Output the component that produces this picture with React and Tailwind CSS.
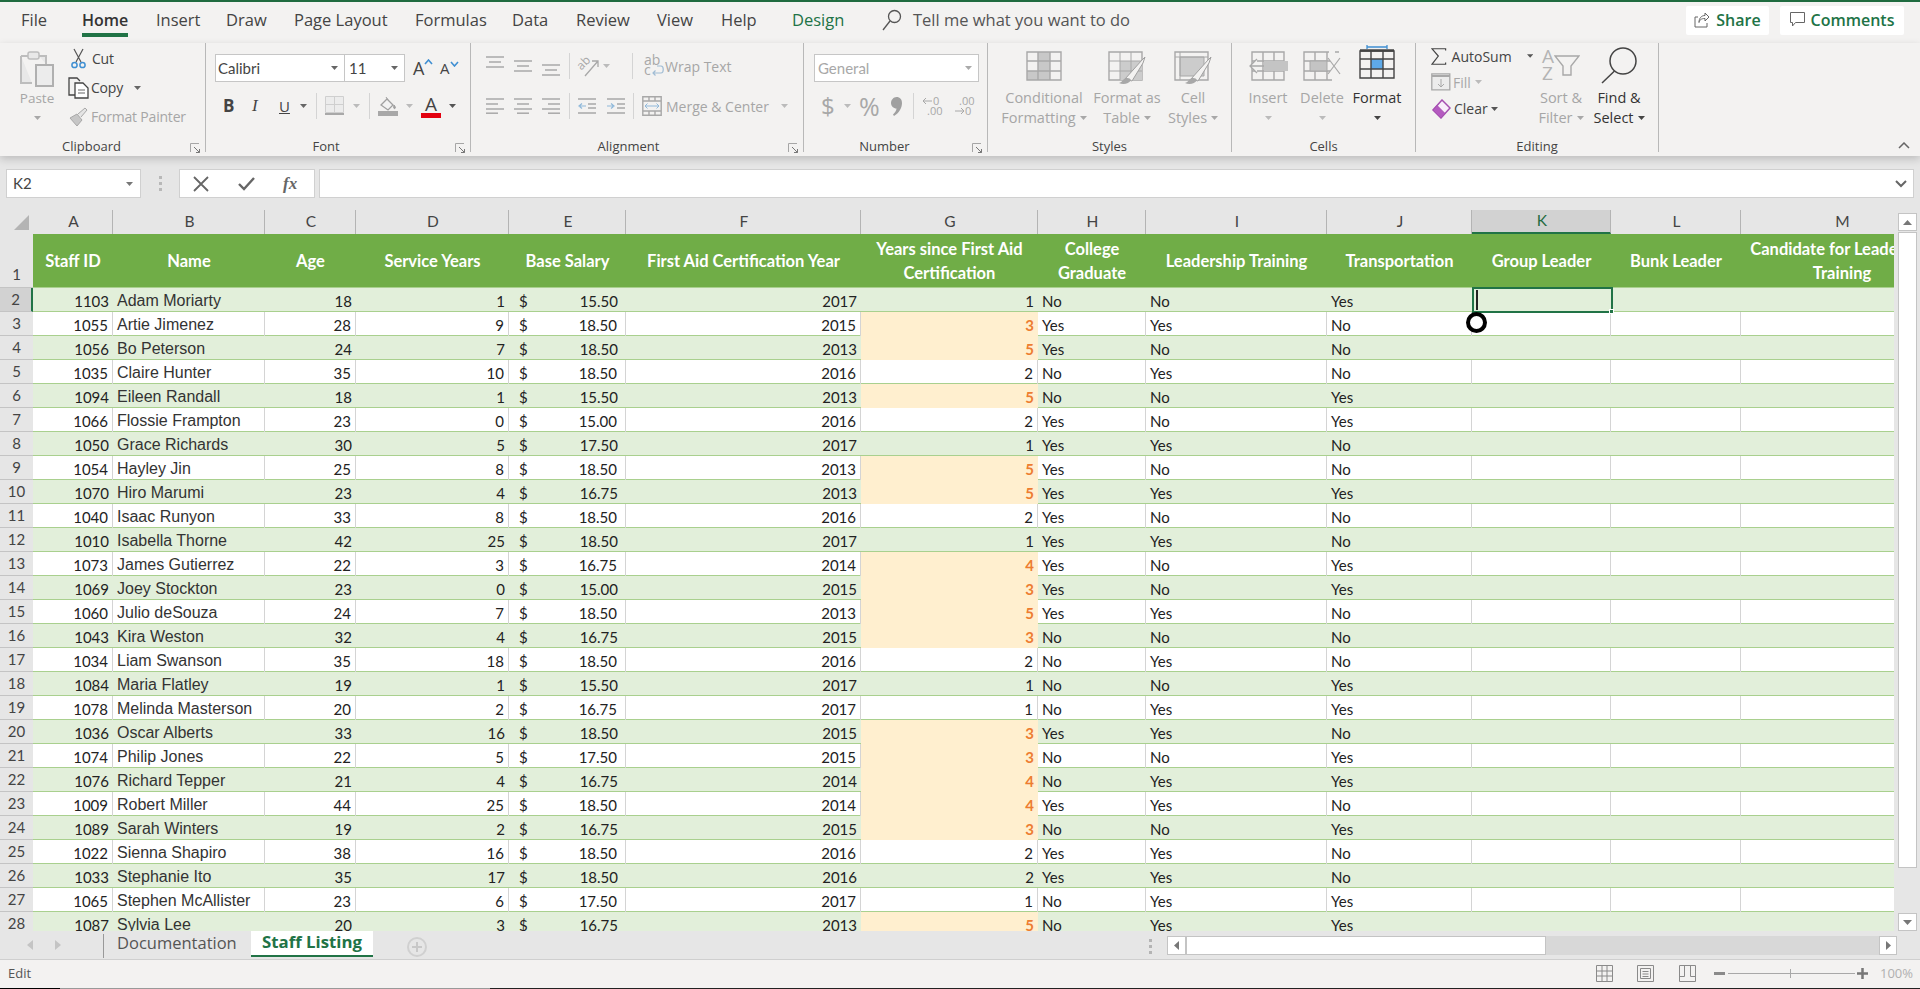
import React from 'react';

const UI = { fontFamily: '"Open Sans", "Noto Sans", sans-serif' };
const CAL = { fontFamily: 'Lato, "Open Sans", sans-serif' };
const ARIAL = { fontFamily: '"Liberation Sans", Arial, sans-serif' };

const GRID = 'grid grid-cols-[80px_152px_91px_153px_117px_235px_177px_108px_181px_145px_139px_130px_202px]';

const STAFF = [
  [1103, 'Adam Moriarty', 18, 1, '15.50', 2017, 1, 'No', 'No', 'Yes'],
  [1055, 'Artie Jimenez', 28, 9, '18.50', 2015, 3, 'Yes', 'Yes', 'No'],
  [1056, 'Bo Peterson', 24, 7, '18.50', 2013, 5, 'Yes', 'No', 'No'],
  [1035, 'Claire Hunter', 35, 10, '18.50', 2016, 2, 'No', 'Yes', 'No'],
  [1094, 'Eileen Randall', 18, 1, '15.50', 2013, 5, 'No', 'No', 'Yes'],
  [1066, 'Flossie Frampton', 23, 0, '15.00', 2016, 2, 'Yes', 'No', 'Yes'],
  [1050, 'Grace Richards', 30, 5, '17.50', 2017, 1, 'Yes', 'Yes', 'No'],
  [1054, 'Hayley Jin', 25, 8, '18.50', 2013, 5, 'Yes', 'No', 'No'],
  [1070, 'Hiro Marumi', 23, 4, '16.75', 2013, 5, 'Yes', 'Yes', 'Yes'],
  [1040, 'Isaac Runyon', 33, 8, '18.50', 2016, 2, 'Yes', 'No', 'No'],
  [1010, 'Isabella Thorne', 42, 25, '18.50', 2017, 1, 'Yes', 'Yes', 'No'],
  [1073, 'James Gutierrez', 22, 3, '16.75', 2014, 4, 'Yes', 'No', 'Yes'],
  [1069, 'Joey Stockton', 23, 0, '15.00', 2015, 3, 'Yes', 'No', 'Yes'],
  [1060, 'Julio deSouza', 24, 7, '18.50', 2013, 5, 'Yes', 'Yes', 'No'],
  [1043, 'Kira Weston', 32, 4, '16.75', 2015, 3, 'No', 'No', 'No'],
  [1034, 'Liam Swanson', 35, 18, '18.50', 2016, 2, 'No', 'Yes', 'No'],
  [1084, 'Maria Flatley', 19, 1, '15.50', 2017, 1, 'No', 'No', 'Yes'],
  [1078, 'Melinda Masterson', 20, 2, '16.75', 2017, 1, 'No', 'Yes', 'Yes'],
  [1036, 'Oscar Alberts', 33, 16, '18.50', 2015, 3, 'Yes', 'Yes', 'No'],
  [1074, 'Philip Jones', 22, 5, '17.50', 2015, 3, 'No', 'No', 'Yes'],
  [1076, 'Richard Tepper', 21, 4, '16.75', 2014, 4, 'No', 'Yes', 'Yes'],
  [1009, 'Robert Miller', 44, 25, '18.50', 2014, 4, 'Yes', 'Yes', 'No'],
  [1089, 'Sarah Winters', 19, 2, '16.75', 2015, 3, 'No', 'No', 'Yes'],
  [1022, 'Sienna Shapiro', 38, 16, '18.50', 2016, 2, 'Yes', 'Yes', 'No'],
  [1033, 'Stephanie Ito', 35, 17, '18.50', 2016, 2, 'Yes', 'Yes', 'No'],
  [1065, 'Stephen McAllister', 23, 6, '17.50', 2017, 1, 'No', 'Yes', 'Yes'],
  [1087, 'Sylvia Lee', 20, 3, '16.75', 2013, 5, 'No', 'Yes', 'Yes'],
];

const COL_LABELS = ['A', 'B', 'C', 'D', 'E', 'F', 'G', 'H', 'I', 'J', 'K', 'L', 'M'];

const GREY = '#a8a8a8';

function Caret({ color = '#8a8a8a', className = '' }) {
  return (
    <svg width="7" height="4" viewBox="0 0 7 4" className={className}>
      <path d="M0 0h7L3.5 4z" fill={color} />
    </svg>
  );
}

function Launcher() {
  return (
    <svg width="11" height="11" viewBox="0 0 11 11" className="absolute right-[4px] bottom-[2px]">
      <path d="M.5 9V.5H9" fill="none" stroke="#a6a6a6" />
      <path d="M4 4l5.5 5.5M6 9.5h3.5V6" fill="none" stroke="#777" />
    </svg>
  );
}

function Sep({ className = 'h-[109px] bg-[#b8b8b8]' }) {
  return <div className={`w-px shrink-0 ${className}`} />;
}

function MiniSep() {
  return <div className="w-px h-[26px] bg-[#d4d4d4] shrink-0" />;
}

function Group({ label, launcher, className = '', children }) {
  return (
    <div className={`relative flex flex-col h-full shrink-0 ${className}`}>
      <div className="h-[95px]">{children}</div>
      <div className="h-[18px] pb-[2px] flex items-center justify-center text-[13px] leading-none text-[#444]">{label}</div>
      {launcher && <Launcher />}
    </div>
  );
}

// ribbon big button: icon on top, up to two lines of label
function BigButton({ icon, iconClass = 'pt-[8px]', line1, line2, caret, disabled = true, className = '' }) {
  const color = disabled ? 'text-[#a6a6a6]' : 'text-[#333]';
  return (
    <div className={`flex flex-col items-center shrink-0 ${color} text-[14.5px] leading-[20px] ${className}`}>
      <div className={`h-[45px] flex items-start justify-center ${iconClass}`}>{icon}</div>
      <div className="whitespace-nowrap">{line1}</div>
      <div className="whitespace-nowrap h-[20px] flex items-center gap-[4px]">
        {line2}
        {caret && <Caret color={disabled ? '#a8a8a8' : '#444'} />}
      </div>
    </div>
  );
}

/* ---------- ribbon icons ---------- */

function PasteIcon() {
  return (
    <svg width="36" height="38" viewBox="0 0 36 38">
      <path d="M2 6h7M20 6h7v8M2 6v27h11" fill="#e8e8e8" stroke="#bdbdbd" strokeWidth="2" />
      <rect x="9" y="2" width="11" height="7" rx="2" fill="#e8e8e8" stroke="#bdbdbd" strokeWidth="1.5" />
      <rect x="17" y="15" width="17" height="21" fill="#ececec" stroke="#b0b0b0" strokeWidth="2" />
    </svg>
  );
}

function ScissorsIcon() {
  return (
    <svg width="15" height="21" viewBox="0 0 15 21">
      <path d="M3 1l7 13M12 1L5 14" stroke="#555" strokeWidth="1.2" fill="none" />
      <circle cx="3.5" cy="17" r="2.6" fill="none" stroke="#3f8fd2" strokeWidth="1.5" />
      <circle cx="11.5" cy="17" r="2.6" fill="none" stroke="#3f8fd2" strokeWidth="1.5" />
    </svg>
  );
}

function CopyIcon() {
  return (
    <svg width="21" height="22" viewBox="0 0 21 22">
      <path d="M7 18H1V1h8l3 3" fill="none" stroke="#444" strokeWidth="1.3" />
      <path d="M7 6h8l5 5v10H7z" fill="#fff" stroke="#444" strokeWidth="1.3" />
      <path d="M10 13h7M10 16h7" stroke="#666" />
    </svg>
  );
}

function PainterIcon() {
  return (
    <svg width="20" height="20" viewBox="0 0 20 20">
      <path d="M2 11l7-4 5 6-5 6C7 16 4 14 2 11z" fill="#c6c6c6" stroke="#a8a8a8" />
      <path d="M10 7l7-6 2 2-6 7" fill="#e4e4e4" stroke="#a8a8a8" />
    </svg>
  );
}

function GrowIcon({ up }) {
  return (
    <svg width="9" height="6" viewBox="0 0 9 6">
      <path d={up ? 'M1 5l3.5-4L8 5' : 'M1 1l3.5 4L8 1'} fill="none" stroke="#3f8fd2" strokeWidth="1.6" />
    </svg>
  );
}

function BordersIcon() {
  return (
    <svg width="19" height="20" viewBox="0 0 19 20">
      <path d="M.5.5h18v16H.5zM9.5.5v16M.5 8.5h18" fill="#ececec" stroke="#cfcfcf" />
      <path d="M0 18h19" stroke="#a8a8a8" strokeWidth="2" />
    </svg>
  );
}

function FillIcon() {
  return (
    <svg width="20" height="20" viewBox="0 0 20 20">
      <path d="M3 9l6-6 6 6-5 5z" fill="#f2f2f2" stroke="#a0a0a0" strokeWidth="1.3" />
      <path d="M8 1l2 3M16 9c1 1.500 2 2.500 1 3.500-1 .5-2-.5-1-3.500z" fill="#a0a0a0" stroke="#a0a0a0" />
      <rect x="0" y="15" width="20" height="5" fill="#a8a8a8" />
    </svg>
  );
}

function LinesIcon({ rows, width = 18, height = 16 }) {
  return (
    <svg width={width} height={height} viewBox={`0 0 ${width} ${height}`} className="block">
      {rows.map(([x1, x2, y]) => (
        <line key={`${x1}-${y}`} x1={x1} x2={x2} y1={y} y2={y} stroke={GREY} strokeWidth="1.5" />
      ))}
    </svg>
  );
}

function IndentIcon({ right }) {
  return (
    <svg width="18" height="16" viewBox="0 0 18 16">
      <path d="M0 1h18M0 15h18M10 6h8M10 10h8" stroke={GREY} strokeWidth="1.5" />
      <path d={right ? 'M0 8h6M4 5.500l3 2.500-3 2.500' : 'M8 8H2M4 5.500L1 8l3 2.500'} fill="none" stroke="#8fb8da" strokeWidth="1.2" />
    </svg>
  );
}

function OrientIcon() {
  return (
    <svg width="22" height="22" viewBox="0 0 22 22" className="overflow-visible">
      <text x="0" y="12" fontSize="12" fill={GREY} transform="rotate(-45 6 10)" style={UI}>ab</text>
      <path d="M7 21L20 6M14 6h6v6" fill="none" stroke={GREY} strokeWidth="1.3" />
    </svg>
  );
}

function WrapIcon() {
  return (
    <svg width="21" height="24" viewBox="0 0 21 24" className="overflow-visible">
      <text x="1" y="11" fontSize="14" fill={GREY} style={UI}>ab</text>
      <text x="1" y="21" fontSize="14" fill={GREY} style={UI}>c</text>
      <path d="M14 12h4c3 0 3 7 0 7h-8M12.500 16.500L10 19l2.500 2.500" fill="none" stroke="#a0bcd4" strokeWidth="1.200" />
    </svg>
  );
}

function MergeIcon() {
  return (
    <svg width="20" height="20" viewBox="0 0 20 20">
      <path d="M.8.800h18.400v18.400H.8zM1 5h18M1 15h18M7 15v4M13 15v4M7 1v4M13 1v4" fill="none" stroke={GREY} strokeWidth="1.400" />
      <path d="M3 10h14M5.500 7.500L3 10l2.500 2.500M14.500 7.500L17 10l-2.500 2.500" fill="none" stroke="#8fb8da" strokeWidth="1" />
    </svg>
  );
}

function CommaIcon() {
  return (
    <svg width="11" height="19" viewBox="0 0 11 19">
      <path d="M5.500 0C9 0 11 2.500 11 6c0 5-3 10-8 13l-1-1.500c2-2 3.500-4 3.500-6C2.500 11.500 0 9 0 6s2.500-6 5.500-6z" fill="#a0a0a0" />
    </svg>
  );
}

function DecimalIcon({ more }) {
  return (
    <svg width="20" height="22" viewBox="0 0 20 22" className="overflow-visible">
      {more ? (
        <>
          <path d="M10 6H1M4 3L1 6l3 3" fill="none" stroke={GREY} />
          <text x="11" y="10" fontSize="11" fill={GREY} style={UI}>0</text>
          <text x="5" y="20" fontSize="11" fill={GREY} style={UI}>.00</text>
        </>
      ) : (
        <>
          <text x="5" y="10" fontSize="11" fill={GREY} style={UI}>.00</text>
          <path d="M1 16h9M7 13l3 3-3 3" fill="none" stroke={GREY} />
          <text x="11" y="20" fontSize="11" fill={GREY} style={UI}>0</text>
        </>
      )}
    </svg>
  );
}

function TableBase({ children, stroke = GREY }) {
  return (
    <svg width="36" height="30" viewBox="0 0 36 30">
      {children}
      <path d="M1 1h34v28H1zM1 10h34M1 20h34M12 1v28M24 1v28" fill="none" stroke={stroke} strokeWidth="1.400" />
    </svg>
  );
}

function BrushTableIcon({ cell }) {
  return (
    <svg width="38" height="36" viewBox="0 0 38 36">
      <path d="M1 1h33v28H1z" fill="none" stroke={GREY} strokeWidth="1.400" />
      {cell ? (
        <>
          <path d="M6 6h24v19H6z" fill="#cccccc" stroke={GREY} />
          <path d="M1 6h33M6 1v28" stroke={GREY} />
        </>
      ) : (
        <>
          <path d="M12 10h22v19H12z" fill="#cccccc" />
          <path d="M1 10h33M1 20h33M12 1v28M23 1v28" stroke={GREY} />
        </>
      )}
      <path d="M17 28L34 9l3-3-2 6-11 18z" fill="#f3f2f1" stroke="#a0a0a0" />
      <path d="M15 29c3-3 7-2 8 0-2 4-8 5-12 3 3-1 3-2 4-3z" fill="#a8a8a8" />
    </svg>
  );
}

function InsertCellsIcon() {
  return (
    <svg width="40" height="30" viewBox="0 0 40 30">
      <path d="M4 1h32v28H4zM4 10h32M4 20h32M15 1v28M26 1v28" fill="none" stroke={GREY} strokeWidth="1.400" />
      <path d="M16 10h24v10H16z" fill="#c4c4c4" />
      <path d="M16 15H2M9 8l-7 7 7 7" fill="#f3f2f1" stroke={GREY} strokeWidth="1.300" />
    </svg>
  );
}

function DeleteCellsIcon() {
  return (
    <svg width="38" height="30" viewBox="0 0 38 30">
      <path d="M26 1H1v28h28M1 10h26M1 20h26M12 1v28M24 1v9M24 20v9M32 1h4" fill="none" stroke={GREY} strokeWidth="1.400" />
      <path d="M7 10h17v10H7z" fill="#c4c4c4" stroke={GREY} />
      <path d="M25 7l12 16M37 7L25 23" stroke={GREY} strokeWidth="1.200" />
    </svg>
  );
}

function FormatCellsIcon() {
  return (
    <svg width="36" height="34" viewBox="0 0 36 34">
      <path d="M8 2h20M8 0v4M28 0v4" stroke="#3f8fd2" strokeWidth="1.300" />
      <rect x="12" y="14" width="12" height="10" fill="#5ea9e8" />
      <path d="M1 6h34v27H1zM1 14h34M1 24h34M12 6v27M24 6v27" fill="none" stroke="#444" strokeWidth="1.400" />
      <path d="M1 5.500h34" stroke="#444" strokeWidth="2.500" />
    </svg>
  );
}

function FunnelIcon() {
  return (
    <svg width="26" height="21" viewBox="0 0 26 21">
      <path d="M1 1h24l-8 10v9h-8v-9z" fill="none" stroke={GREY} strokeWidth="1.400" />
    </svg>
  );
}

function FindIcon() {
  return (
    <svg width="36" height="37" viewBox="0 0 36 37">
      <ellipse cx="22" cy="14" rx="13" ry="13" fill="none" stroke="#444" strokeWidth="1.500" />
      <path d="M13.500 24L1 36" stroke="#444" strokeWidth="1.500" />
    </svg>
  );
}

function SigmaIcon() {
  return (
    <svg width="17" height="19" viewBox="0 0 17 19">
      <path d="M16 3V1H1l7 8-7 9h15v-2" fill="none" stroke="#444" strokeWidth="1.300" />
    </svg>
  );
}

function FillDownIcon() {
  return (
    <svg width="20" height="18" viewBox="0 0 20 18">
      <path d="M.8.800h18v16H.8z" fill="#ececec" stroke={GREY} strokeWidth="1.300" />
      <path d="M1 3h18" stroke={GREY} strokeWidth="2" />
      <path d="M10 6v8M7 11l3 3 3-3" fill="none" stroke={GREY} />
    </svg>
  );
}

function EraserIcon() {
  return (
    <svg width="20" height="20" viewBox="0 0 20 20">
      <path d="M11 1l8 8-9 10-8-8z" fill="#f8eefa" stroke="#a54fb0" strokeWidth="1.500" />
      <path d="M6 6.500l8 8-4 4.500-8-8z" fill="#b45ac0" stroke="#a54fb0" />
    </svg>
  );
}

function SearchGlass() {
  return (
    <svg width="20" height="22" viewBox="0 0 20 22">
      <circle cx="12.500" cy="7.500" r="6" fill="none" stroke="#555" strokeWidth="1.300" />
      <path d="M8 12l-7 9" stroke="#555" strokeWidth="1.300" />
    </svg>
  );
}

function ShareIcon() {
  return (
    <svg width="16" height="16" viewBox="0 0 16 16">
      <path d="M11 1l4 4-4 4V6.500C7 6.500 5.500 8 5 10.500 5 6 7.500 3.500 11 3.500z" fill="none" stroke="#666" />
      <path d="M13 11v4H1V5h3" fill="none" stroke="#666" />
    </svg>
  );
}

function CommentIcon() {
  return (
    <svg width="15" height="15" viewBox="0 0 15 15">
      <path d="M.5.500h14v10H5.500L2.500 14v-3.500h-2z" fill="none" stroke="#666" />
    </svg>
  );
}

/* ---------- ribbon ---------- */

function TabBar() {
  const tabs = [
    ['File', 'ml-[21px] w-[61px]'],
    ['Home', 'w-[74px]', true],
    ['Insert', 'w-[70px]'],
    ['Draw', 'w-[68px]'],
    ['Page Layout', 'w-[121px]'],
    ['Formulas', 'w-[97px]'],
    ['Data', 'w-[64px]'],
    ['Review', 'w-[81px]'],
    ['View', 'w-[64px]'],
    ['Help', 'w-[71px]'],
  ];
  return (
    <div className="h-[43px] flex items-start border-t-2 border-[#1f6b3f] text-[#444] text-[16.5px]">
      {tabs.map(([label, width, active]) => (
        <div key={label} className={`${width} shrink-0`}>
          <div className={`inline-block h-[35px] pt-[6px] leading-[24px] ${active ? 'border-b-[4px] border-[#217346] font-semibold text-[#333] text-[16px]' : ''}`}>
            {label}
          </div>
        </div>
      ))}
      <div className="w-[90px] pt-[6px] leading-[24px] text-[#217346] shrink-0">Design</div>
      <div className="flex items-center gap-[11px] pt-[6px] h-[30px] text-[#555]">
        <SearchGlass />
        <span className="whitespace-nowrap">Tell me what you want to do</span>
      </div>
      <div className="ml-auto mr-[16px] mt-[4px] flex gap-[11px] text-[#217346] font-semibold text-[16px]">
        <div className="h-[29px] w-[83px] pb-[2px] bg-white rounded-[2px] flex items-center justify-center gap-[6px]">
          <ShareIcon />
          <span>Share</span>
        </div>
        <div className="h-[29px] w-[124px] pb-[2px] bg-white rounded-[2px] flex items-center justify-center gap-[6px]">
          <CommentIcon />
          <span>Comments</span>
        </div>
      </div>
    </div>
  );
}

function ClipboardGroup() {
  return (
    <Group label={<span className="-ml-[22px]">Clipboard</span>} launcher className="w-[205px]">
      <div className="flex">
        <div className="ml-[18px] w-[38px] flex flex-col items-center text-[13.500px] leading-[20px] text-[#a6a6a6]">
          <div className="h-[45px] flex items-end"><PasteIcon /></div>
          <div>Paste</div>
          <div className="h-[20px] flex items-center"><Caret color="#a8a8a8" /></div>
        </div>
        <div className="ml-[12px] flex flex-col text-[14px] tracking-[-0.2px]">
          <div className="h-[30px] flex items-center gap-[6px] text-[#444] pl-[3px]"><ScissorsIcon /> Cut</div>
          <div className="h-[29px] flex items-center gap-[2px] text-[#444]">
            <CopyIcon /> Copy <Caret color="#666" className="ml-[9px]" />
          </div>
          <div className="h-[29px] flex items-center gap-[3px] text-[#a6a6a6] whitespace-nowrap"><PainterIcon /> Format Painter</div>
        </div>
      </div>
    </Group>
  );
}

function FontGroup() {
  return (
    <Group label={<span className="-ml-[24px]">Font</span>} launcher className="w-[264px]">
      <div className="pl-[9px] pt-[11px]">
        <div className="flex items-center h-[28px]">
          <div className="w-[130px] h-[28px] bg-white border border-[#c6c6c6] flex items-center justify-between pl-[2px] pr-[6px] text-[15px] text-[#444]" style={CAL}>
            Calibri <Caret color="#666" />
          </div>
          <div className="w-[60px] h-[28px] bg-white border-y border-r border-[#c6c6c6] flex items-center justify-between pl-[4px] pr-[6px] text-[15px] text-[#444]" style={CAL}>
            11 <Caret color="#666" />
          </div>
          <div className="ml-[8px] w-[27px] flex items-start text-[18px] leading-none text-[#444]">A<GrowIcon up /></div>
          <div className="w-[20px] flex items-start text-[15px] leading-none text-[#444]">A<GrowIcon /></div>
        </div>
        <div className="flex items-center h-[28px] mt-[10px] text-[#444]">
          <div className="ml-[8px] w-[27px] font-bold text-[17px]">B</div>
          <div className="ml-[2px] w-[27px] italic text-[17px]" style={{ fontFamily: '"Liberation Serif", serif' }}>I</div>
          <div className="w-[21px] underline text-[15px]">U</div>
          <Caret color="#666" />
          <div className="w-[9px]" />
          <MiniSep />
          <div className="w-[8px]" />
          <BordersIcon />
          <div className="w-[9px]" />
          <Caret color="#bbb" />
          <div className="w-[9px]" />
          <MiniSep />
          <div className="w-[8px]" />
          <FillIcon />
          <div className="w-[8px]" />
          <Caret color="#bbb" />
          <div className="w-[8px]" />
          <div className="w-[20px] flex flex-col items-center">
            <span className="text-[19px] leading-[18px]">A</span>
            <div className="h-[5px] w-[20px] bg-[#e3000f]" />
          </div>
          <div className="w-[8px]" />
          <Caret color="#555" />
        </div>
      </div>
    </Group>
  );
}

function AlignmentGroup() {
  const iconRow = 'flex items-center h-[40px]';
  return (
    <Group label={<span className="-ml-[17px]">Alignment</span>} launcher className="w-[332px]">
      <div className="pl-[15px] pt-[3px] text-[#a6a6a6] text-[14px]">
        <div className={iconRow}>
          <LinesIcon width={18} height={20} rows={[[0, 18, 1], [3, 15, 6], [0, 18, 11]]} />
          <div className="w-[10px]" />
          <LinesIcon width={18} height={20} rows={[[0, 18, 5], [3, 15, 10], [0, 18, 15]]} />
          <div className="w-[10px]" />
          <LinesIcon width={18} height={20} rows={[[0, 18, 9], [3, 15, 14], [0, 18, 19]]} />
          <div className="w-[9px]" />
          <MiniSep />
          <div className="w-[8px]" />
          <OrientIcon />
          <div className="w-[3px]" />
          <Caret color="#bbb" />
          <div className="w-[22px]" />
          <MiniSep />
          <div className="w-[10px]" />
          <WrapIcon />
          <span className="whitespace-nowrap ml-[1px]">Wrap Text</span>
        </div>
        <div className={iconRow}>
          <LinesIcon rows={[[0, 18, 1], [0, 12, 6], [0, 18, 11], [0, 12, 15.200]]} />
          <div className="w-[10px]" />
          <LinesIcon rows={[[0, 18, 1], [3, 15, 6], [0, 18, 11], [3, 15, 15.200]]} />
          <div className="w-[10px]" />
          <LinesIcon rows={[[0, 18, 1], [6, 18, 6], [0, 18, 11], [6, 18, 15.200]]} />
          <div className="w-[9px]" />
          <MiniSep />
          <div className="w-[8px]" />
          <IndentIcon />
          <div className="w-[11px]" />
          <IndentIcon right />
          <div className="w-[8px]" />
          <MiniSep />
          <div className="w-[8px]" />
          <MergeIcon />
          <span className="whitespace-nowrap ml-[4px]">Merge &amp; Center</span>
          <Caret color="#bbb" className="ml-[12px]" />
        </div>
      </div>
    </Group>
  );
}

function NumberGroup() {
  return (
    <Group label={<span className="-ml-[22px]">Number</span>} launcher className="w-[183px]">
      <div className="pl-[10px] pt-[11px] text-[#a8a8a8]">
        <div className="w-[165px] h-[28px] bg-white border border-[#c6c6c6] flex items-center justify-between pl-[3px] pr-[6px] text-[15px]" style={CAL}>
          General <Caret color="#aaa" />
        </div>
        <div className="flex items-center h-[28px] mt-[10px]">
          <span className="ml-[7px] w-[23px] text-[24px] leading-none">$</span>
          <Caret color="#bbb" />
          <span className="ml-[8px] w-[32px] text-[25px] leading-none">%</span>
          <CommaIcon />
          <div className="w-[11px]" />
          <MiniSep />
          <div className="w-[8px]" />
          <DecimalIcon more />
          <div className="w-[12px]" />
          <DecimalIcon />
        </div>
      </div>
    </Group>
  );
}

function StylesGroup() {
  return (
    <Group label="Styles" className="w-[243px]">
      <div className="flex">
        <BigButton
          className="ml-[14px] w-[84px]"
          line1="Conditional"
          line2="Formatting"
          caret
          icon={
            <TableBase>
              <path d="M12 1h12v9H12zM12 10h12v10H12zM1 20h23v9H1z" fill="#c8c8c8" />
            </TableBase>
          }
        />
        <BigButton className="w-[82px]" line1="Format as" line2="Table" caret icon={<BrushTableIcon />} />
        <BigButton className="w-[50px]" line1="Cell" line2="Styles" caret icon={<BrushTableIcon cell />} />
      </div>
    </Group>
  );
}

function CellsGroup() {
  return (
    <Group label="Cells" className="w-[183px]">
      <div className="flex pl-[9px]">
        <BigButton className="w-[54px]" line1="Insert" line2={<Caret color="#bbb" />} icon={<InsertCellsIcon />} />
        <BigButton className="w-[54px]" line1="Delete" line2={<Caret color="#bbb" />} icon={<DeleteCellsIcon />} />
        <BigButton className="w-[56px]" iconClass="pt-[2px]" disabled={false} line1="Format" line2={<Caret color="#444" />} icon={<FormatCellsIcon />} />
      </div>
    </Group>
  );
}

function EditingGroup() {
  return (
    <Group label="Editing" className="w-[242px]">
      <div className="flex pl-[15px] text-[14px]">
        <div className="w-[102px] flex flex-col">
          <div className="h-[26px] flex items-center gap-[5px] text-[#444] whitespace-nowrap">
            <SigmaIcon /> AutoSum <Caret color="#555" className="ml-[10px]" />
          </div>
          <div className="h-[26px] flex items-center gap-[2px] text-[#a8a8a8]">
            <FillDownIcon /> Fill <Caret color="#bbb" className="ml-[2px]" />
          </div>
          <div className="h-[27px] flex items-center gap-[3px] text-[#444]">
            <EraserIcon /> Clear <Caret color="#555" />
          </div>
        </div>
        <BigButton
          className="w-[56px]"
          iconClass="pt-[5px]"
          line1="Sort &"
          line2="Filter"
          caret
          icon={
            <div className="flex items-center">
              <div className="flex flex-col text-[19px] leading-[17px] text-[#b4b4b4]" style={UI}>
                <span>A</span>
                <span>Z</span>
              </div>
              <FunnelIcon />
            </div>
          }
        />
        <BigButton className="w-[60px]" iconClass="pt-[4px]" disabled={false} line1="Find &" line2="Select" caret icon={<FindIcon />} />
      </div>
    </Group>
  );
}

function Ribbon() {
  return (
    <div className="relative h-[113px] flex shadow-[0_3px_8px_rgba(0,0,0,0.18)] z-10 bg-[#f3f2f1]">
      <ClipboardGroup />
      <Sep />
      <FontGroup />
      <Sep />
      <AlignmentGroup />
      <Sep />
      <NumberGroup />
      <Sep />
      <StylesGroup />
      <Sep />
      <CellsGroup />
      <Sep />
      <EditingGroup />
      <Sep />
      <svg width="12" height="7" viewBox="0 0 12 7" className="absolute right-[10px] bottom-[7px]">
        <path d="M1 6l5-5 5 5" fill="none" stroke="#666" strokeWidth="1.500" />
      </svg>
    </div>
  );
}

function FormulaBar() {
  return (
    <div className="h-[54px] pt-[13px] pl-[6px] pr-[6px] flex items-start bg-[#e6e6e6] shrink-0">
      <div className="w-[135px] h-[29px] bg-white border border-[#d0d0d0] flex items-center justify-between pl-[6px] pr-[7px] text-[15px] text-[#444]" style={CAL}>
        K2 <Caret color="#777" />
      </div>
      <div className="w-[38px] h-[29px] flex flex-col items-center justify-center gap-[3px]">
        <div className="w-[3px] h-[3px] bg-[#b8b8b8]" />
        <div className="w-[3px] h-[3px] bg-[#b8b8b8]" />
        <div className="w-[3px] h-[3px] bg-[#b8b8b8]" />
      </div>
      <div className="w-[136px] h-[29px] bg-white border border-[#d0d0d0] flex items-center shrink-0">
        <svg width="16" height="16" viewBox="0 0 16 16" className="ml-[13px]">
          <path d="M1 1l14 14M15 1L1 15" stroke="#666" strokeWidth="1.800" />
        </svg>
        <svg width="17" height="14" viewBox="0 0 17 14" className="ml-[29px]">
          <path d="M1 7l5 5L16 1" fill="none" stroke="#666" strokeWidth="2.400" />
        </svg>
        <span className="ml-[28px] italic font-bold text-[17px] text-[#666]" style={{ fontFamily: '"Liberation Serif", serif' }}>fx</span>
      </div>
      <div className="ml-[4px] flex-1 h-[29px] bg-white border border-[#d0d0d0] flex items-center justify-end pr-[6px]">
        <svg width="12" height="8" viewBox="0 0 12 8">
          <path d="M1 1l5 5 5-5" fill="none" stroke="#666" strokeWidth="2" />
        </svg>
      </div>
    </div>
  );
}

/* ---------- sheet ---------- */

function ColumnHeaders() {
  return (
    <div className="flex h-[24px] shrink-0 bg-[#e6e6e6]">
      <div className="w-[33px] shrink-0 relative">
        <div className="absolute right-[4px] bottom-[4px] w-0 h-0 border-l-[15px] border-l-transparent border-b-[15px] border-b-[#b4b4b4]" />
      </div>
      <div className={`${GRID} shrink-0 text-[15.500px] text-[#444]`} style={CAL}>
        {COL_LABELS.map((c) => (
          <div
            key={c}
            className={`h-[24px] pl-[2px] flex items-center justify-center border-r border-[#b4b4b4] ${c === 'K' ? 'bg-[#d2d2d2] border-b-2 border-b-[#217346] text-[#1f6b3f]' : ''}`}
          >
            {c}
          </div>
        ))}
      </div>
    </div>
  );
}

function HeaderCell({ children }) {
  return <div className="flex items-center justify-center text-center leading-[24px] whitespace-nowrap">{children}</div>;
}

function HeaderRow() {
  return (
    <div className="flex h-[54px] shrink-0">
      <div className="w-[33px] shrink-0 bg-[#e6e6e6] border-b border-[#c4c4c4] flex items-end justify-center pb-[2px] text-[15px] text-[#444]" style={CAL}>1</div>
      <div className={`${GRID} shrink-0 bg-[#70ad47] text-white font-bold text-[16.500px] border-b border-[#a9d08e]`} style={CAL}>
        <HeaderCell>Staff ID</HeaderCell>
        <HeaderCell>Name</HeaderCell>
        <HeaderCell>Age</HeaderCell>
        <HeaderCell>Service Years</HeaderCell>
        <HeaderCell>Base Salary</HeaderCell>
        <HeaderCell>First Aid Certification Year</HeaderCell>
        <HeaderCell><span>Years since First Aid<br />Certification</span></HeaderCell>
        <HeaderCell><span>College<br />Graduate</span></HeaderCell>
        <HeaderCell>Leadership Training</HeaderCell>
        <HeaderCell>Transportation</HeaderCell>
        <HeaderCell>Group Leader</HeaderCell>
        <HeaderCell>Bunk Leader</HeaderCell>
        <HeaderCell><span>Candidate for Leadership<br />Training</span></HeaderCell>
      </div>
    </div>
  );
}

function StaffRow({ row, index }) {
  const [id, name, age, service, salary, year, since, college, leadership, transport] = row;
  const banded = index % 2 === 0;
  const line = banded ? '' : 'border-r border-[#d4d4d4]';
  const cell = `px-[4px] pt-[1px] flex items-center whitespace-nowrap ${line}`;
  const flagged = since >= 3;
  return (
    <div className="flex h-[24px] shrink-0">
      <div className={`w-[33px] shrink-0 flex items-center justify-center text-[15px] text-[#444] border-b border-[#c4c4c4] ${index === 0 ? 'bg-[#d2d2d2] border-r-2 border-r-[#217346]' : 'bg-[#e6e6e6]'}`} style={CAL}>
        {index + 2}
      </div>
      <div className={`${GRID} shrink-0 text-[15px] text-[#222] border-b border-[#a9d08e] ${banded ? 'bg-[#e2efda]' : 'bg-white'}`} style={CAL}>
        <div className={`${cell} justify-end`}>{id}</div>
        <div className={`${cell} text-[16px] text-[#333]`} style={ARIAL}>{name}</div>
        <div className={`${cell} justify-end`}>{age}</div>
        <div className={`${cell} justify-end`}>{service}</div>
        <div className={`${cell} justify-between pl-[10px] pr-[8px]`}><span>$</span><span>{salary}</span></div>
        <div className={`${cell} justify-end`}>{year}</div>
        <div className={`px-[4px] pt-[1px] flex items-center justify-end ${flagged ? 'bg-[#ffefcf] text-[#ed7d31] font-bold' : line}`}>{since}</div>
        <div className={cell}>{college}</div>
        <div className={cell}>{leadership}</div>
        <div className={cell}>{transport}</div>
        <div className={cell} />
        <div className={cell} />
        <div className={cell} />
      </div>
    </div>
  );
}

function VerticalScrollbar() {
  return (
    <div className="w-[26px] shrink-0 bg-[#e6e6e6] pt-[3px] pl-[4px] flex flex-col">
      <div className="w-[19px] h-[18px] bg-white border border-[#c4c4c4] flex items-center justify-center">
        <svg width="9" height="5" viewBox="0 0 9 5"><path d="M0 5h9L4.500 0z" fill="#777" /></svg>
      </div>
      <div className="w-[19px] h-[636px] mt-[1px] bg-white border border-[#c4c4c4]" />
      <div className="flex-1" />
      <div className="w-[19px] h-[18px] bg-white border border-[#c4c4c4] flex items-center justify-center">
        <svg width="9" height="5" viewBox="0 0 9 5"><path d="M0 0h9L4.500 5z" fill="#777" /></svg>
      </div>
    </div>
  );
}

function Sheet() {
  return (
    <div className="flex h-[721px] shrink-0 overflow-hidden">
      <div className="relative w-[1894px] shrink-0 overflow-hidden flex flex-col bg-white">
        <ColumnHeaders />
        <HeaderRow />
        {STAFF.map((row, i) => (
          <StaffRow key={row[0]} row={row} index={i} />
        ))}
        {/* active cell K2 */}
        <div className="absolute left-[1472px] top-[77px] w-[141px] h-[26px] border-2 border-[#217346]">
          <div className="absolute left-[2px] top-[1px] w-[2px] h-[20px] bg-[#222]" />
          <div className="absolute -right-[3px] -bottom-[3px] w-[5px] h-[5px] bg-[#217346] border border-white" />
        </div>
        {/* touch selection ring */}
        <div className="absolute left-[1466px] top-[102px] w-[21px] h-[21px] rounded-full border-[4px] border-black bg-white" />
      </div>
      <VerticalScrollbar />
    </div>
  );
}

function SheetTabs() {
  return (
    <div className="h-[29px] flex bg-[#e6e6e6] shrink-0 border-b border-[#cfcfcf] text-[16.500px]" style={UI}>
      <div className="w-[103px] flex items-center shrink-0 pl-[27px] gap-[22px]">
        <svg width="6" height="10" viewBox="0 0 6 10"><path d="M6 0v10L0 5z" fill="#c4c4c4" /></svg>
        <svg width="6" height="10" viewBox="0 0 6 10"><path d="M0 0v10l6-5z" fill="#c4c4c4" /></svg>
      </div>
      <div className="w-px h-[24px] mt-[3px] bg-[#999] shrink-0" />
      <div className="w-[147px] pl-[13px] leading-[23px] text-[#555] shrink-0">Documentation</div>
      <div className="w-[122px] h-[26px] bg-white border-b-2 border-[#217346] text-[#217346] font-bold text-[16.800px] text-center leading-[22px] shrink-0 whitespace-nowrap">Staff Listing</div>
      <div className="ml-[34px] mt-[6px] w-[20px] h-[20px] rounded-full border-2 border-[#d0d0d0] flex items-center justify-center shrink-0">
        <svg width="10" height="10" viewBox="0 0 10 10"><path d="M5 0v10M0 5h10" stroke="#c8c8c8" strokeWidth="2" /></svg>
      </div>
      <div className="ml-[722px] mt-[8px] flex flex-col gap-[3px] shrink-0">
        <div className="w-[3px] h-[3px] bg-[#b4b4b4]" />
        <div className="w-[3px] h-[3px] bg-[#b4b4b4]" />
        <div className="w-[3px] h-[3px] bg-[#b4b4b4]" />
      </div>
      <div className="ml-[15px] mt-[5px] w-[730px] h-[19px] flex shrink-0">
        <div className="w-[19px] bg-white border border-[#c4c4c4] flex items-center justify-center">
          <svg width="5" height="9" viewBox="0 0 5 9"><path d="M5 0v9L0 4.500z" fill="#777" /></svg>
        </div>
        <div className="w-[360px] bg-white border border-[#c4c4c4]" />
        <div className="flex-1 bg-[#d8d8d8]" />
        <div className="w-[18px] bg-white border border-[#c4c4c4] flex items-center justify-center">
          <svg width="5" height="9" viewBox="0 0 5 9"><path d="M0 0v9l5-4.500z" fill="#777" /></svg>
        </div>
      </div>
    </div>
  );
}

function StatusBar() {
  return (
    <div className="flex-1 flex items-center pl-[8px] bg-[#f3f2f1] text-[13px] text-[#555] pb-[1px]">
      <span>Edit</span>
      <div className="ml-auto flex items-center text-[#8a8a8a]">
        <svg width="17" height="17" viewBox="0 0 17 17"><path d="M.5.500h16v16H.5zM.5 6h16M.5 11h16M6 .500v16M11 .500v16" fill="none" stroke="#8a8a8a" /></svg>
        <svg width="17" height="17" viewBox="0 0 17 17" className="ml-[24px]"><path d="M.5.500h16v16H.5z" fill="none" stroke="#8a8a8a" /><path d="M3.500 3.500h10v10h-10zM5.500 6.500h6M5.500 9h6M5.500 11.500h6" fill="none" stroke="#8a8a8a" /></svg>
        <svg width="17" height="17" viewBox="0 0 17 17" className="ml-[25px]"><path d="M.5.500h16v16H.5zM.5 11.500h5V.5M11.500.500v11h5" fill="none" stroke="#8a8a8a" /></svg>
        <div className="ml-[18px] w-[11px] h-[3px] bg-[#8a8a8a]" />
        <div className="relative ml-[3px] w-[127px] h-px bg-[#a8a8a8]">
          <div className="absolute left-[62px] -top-[4px] w-px h-[9px] bg-[#a8a8a8]" />
        </div>
        <svg width="11" height="11" viewBox="0 0 11 11" className="ml-[2px]"><path d="M5.500 0v11M0 5.500h11" stroke="#777" strokeWidth="2.500" /></svg>
        <span className="ml-[12px] mr-[7px] text-[13px] text-[#b0b0b0]">100%</span>
      </div>
    </div>
  );
}

export default function App() {
  return (
    <div className="w-[1920px] h-[989px] overflow-hidden flex flex-col bg-[#f3f2f1]" style={UI}>
      <TabBar />
      <Ribbon />
      <FormulaBar />
      <Sheet />
      <SheetTabs />
      <StatusBar />
      <div className="h-px flex shrink-0 bg-[#999]">
        <div className="w-[60px] bg-black" />
        <div className="w-[430px]" />
        <div className="flex-1 bg-[#222]" />
      </div>
    </div>
  );
}
